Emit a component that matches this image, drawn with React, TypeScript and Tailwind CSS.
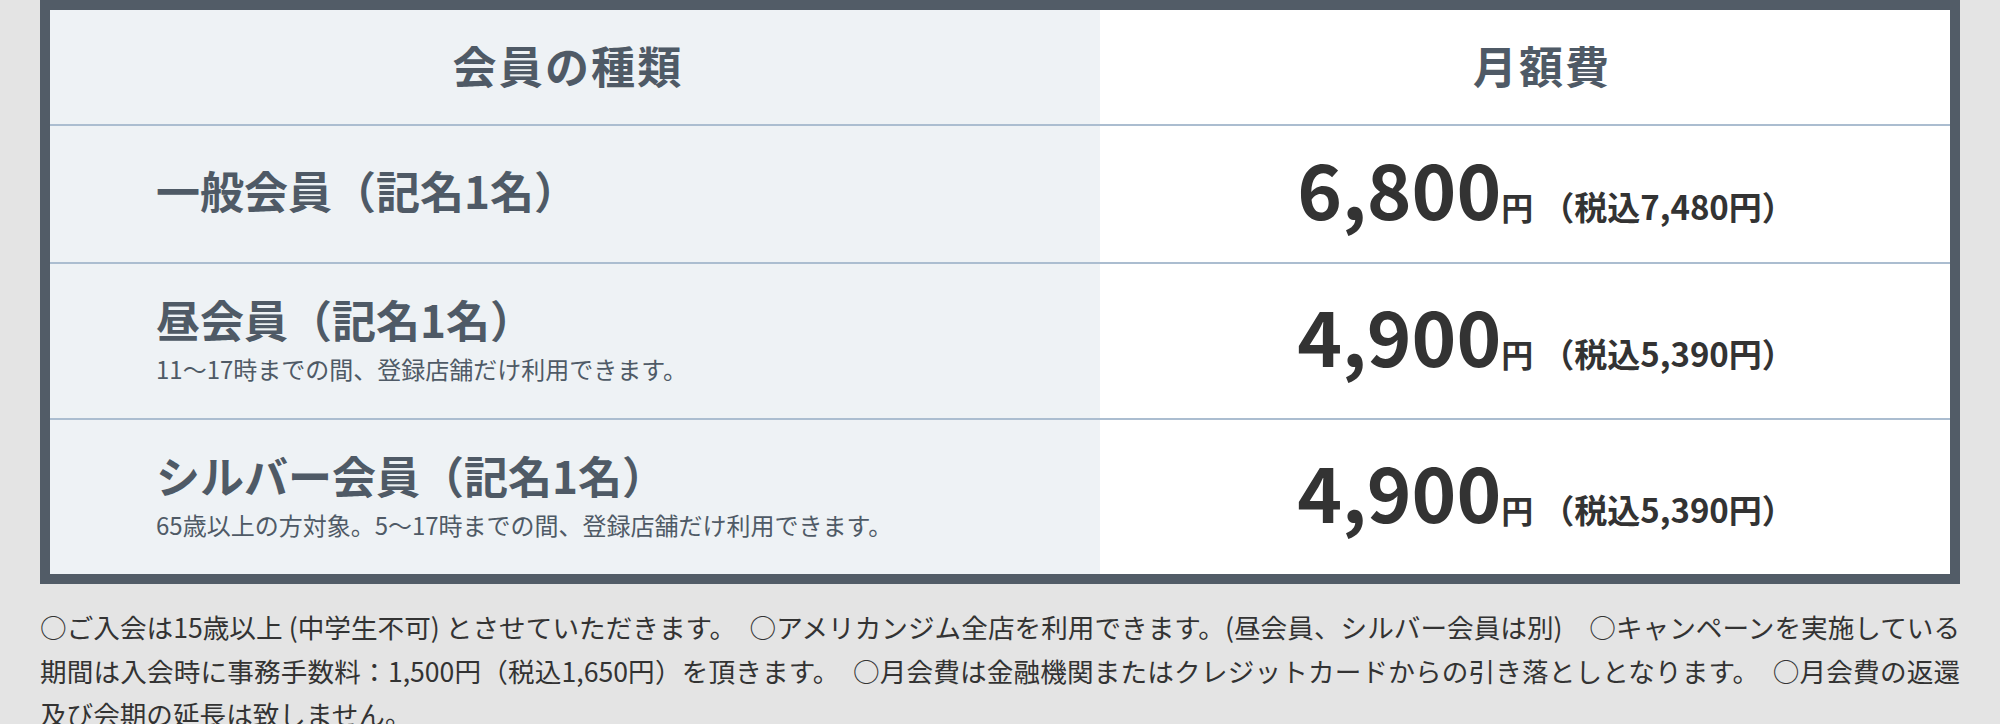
const plans = [
  { name: '一般会員（記名1名）', note: '', price: '6,800', tax: '7,480' },
  { name: '昼会員（記名1名）', note: '11〜17時までの間、登録店舗だけ利用できます。', price: '4,900', tax: '5,390' },
  {
    name: 'シルバー会員（記名1名）',
    note: '65歳以上の方対象。5〜17時までの間、登録店舗だけ利用できます。',
    price: '4,900',
    tax: '5,390',
  },
];

export default function App() {
  return (
    <div className="min-h-screen bg-[#e4e4e4] px-[40px] font-['Noto_Sans_CJK_JP','Noto_Sans',sans-serif]">
      {/* 料金表 */}
      <div className="border-[10px] border-[#525c67] bg-white">
        <div className="flex h-[114px]">
          <div className="flex w-[1050px] items-center justify-center bg-[#eef2f5] pb-[4px] pr-[14px] text-[44px] font-bold leading-[64px] tracking-[0.05em] text-[#4f5a66]">
            会員の種類
          </div>
          <div className="flex flex-1 items-center justify-center pb-[4px] pl-[34px] text-[44px] font-bold leading-[64px] tracking-[0.05em] text-[#4f5a66]">
            月額費
          </div>
        </div>

        {plans.map((p) => (
          <div key={p.name} className="flex border-t-2 border-[#abbdd0]">
            <div className="flex w-[1050px] flex-col justify-center bg-[#eef2f5] pb-[31px] pl-[106px] pt-[23px] text-[#4f5a66]">
              <div className="text-[44px] font-bold leading-[64px]">{p.name}</div>
              {p.note && <div className="text-[24px] leading-[36px]">{p.note}</div>}
            </div>
            <div className="flex flex-1 items-center justify-center pb-[34px] pl-[42px] pt-[20px] font-bold text-[#333]">
              <div className="flex items-baseline">
                <span className="text-[76px] leading-[82px]">{p.price}</span>
                <span className="text-[32px] leading-[32px]">円</span>
                <span className="ml-2 text-[33px] leading-[33px]">（税込{p.tax}円）</span>
              </div>
            </div>
          </div>
        ))}
      </div>

      {/* 注意事項 */}
      <p className="mt-[21px] text-justify text-[26.6px] leading-[43.5px] text-[#333]">
        ○ご入会は15歳以上 (中学生不可) とさせていただきます。　○アメリカンジム全店を利用できます。(昼会員、シルバー会員は別)　○キャンペーンを実施している期間は入会時に事務手数料：1,500円（税込1,650円）を頂きます。　○月会費は金融機関またはクレジットカードからの引き落としとなります。　○月会費の返還及び会期の延長は致しません。
      </p>
    </div>
  );
}
